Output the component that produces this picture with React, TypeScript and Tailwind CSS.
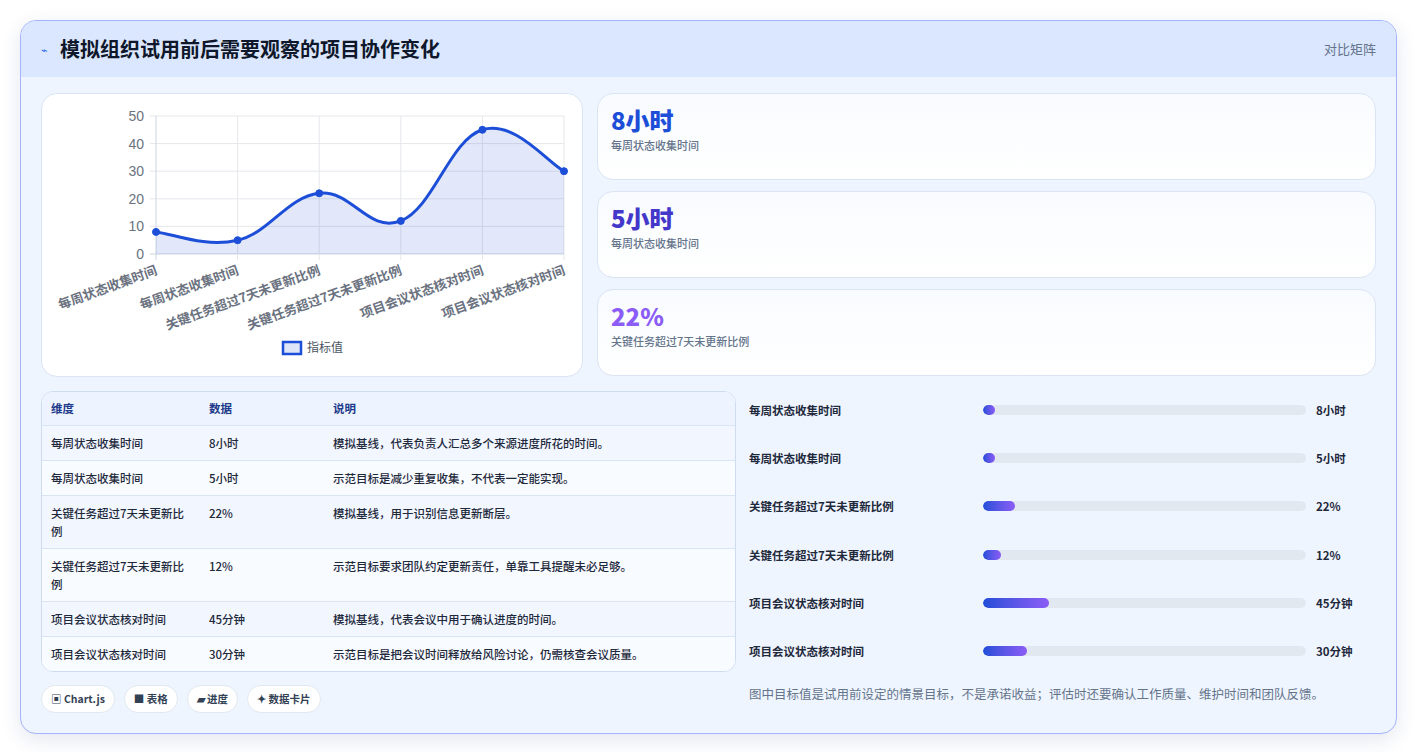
import React from "react";

const F = { fontFamily: '"Noto Sans CJK SC", "Noto Sans", sans-serif' };

const vals = [8, 5, 22, 12, 45, 30];
const labels = ["每周状态收集时间", "每周状态收集时间", "关键任务超过7天未更新比例", "关键任务超过7天未更新比例", "项目会议状态核对时间", "项目会议状态核对时间"];

function Chart() {
  const x0 = 114, x1 = 522, y0 = 160, y1 = 22;
  const pts = vals.map((v, i) => [x0 + (i * (x1 - x0)) / 5, y0 - (v / 50) * (y0 - y1)]);
  let d = `M${pts[0][0]},${pts[0][1]}`;
  const t = 0.4;
  for (let i = 0; i < pts.length - 1; i++) {
    const p0 = pts[Math.max(0, i - 1)], p1 = pts[i], p2 = pts[i + 1], p3 = pts[Math.min(pts.length - 1, i + 2)];
    const c1 = [p1[0] + ((p2[0] - p0[0]) * t) / 2, p1[1] + ((p2[1] - p0[1]) * t) / 2];
    const c2 = [p2[0] - ((p3[0] - p1[0]) * t) / 2, p2[1] - ((p3[1] - p1[1]) * t) / 2];
    d += ` C${c1[0]},${c1[1]} ${c2[0]},${c2[1]} ${p2[0]},${p2[1]}`;
  }
  const area = d + ` L${x1},${y0} L${x0},${y0} Z`;
  return (
    <svg width="542" height="283" viewBox="0 0 542 283" style={{ fontFamily: '"Liberation Sans", "Noto Sans CJK SC", sans-serif' }}>
      {[0, 10, 20, 30, 40, 50].map((v) => {
        const y = y0 - (v / 50) * (y0 - y1);
        return (
          <g key={v}>
            <line x1={x0 - 6} x2={x1} y1={y} y2={y} stroke={v === 0 ? "#cbd5e1" : "#e5e7eb"} />
            <text x={x0 - 12} y={y + 5} textAnchor="end" fontSize="14" fill="#6b7280">{v}</text>
          </g>
        );
      })}
      {pts.map((p, i) => (
        <line key={i} x1={p[0]} x2={p[0]} y1={y1} y2={y0 + 6} stroke={i === 0 ? "#cbd5e1" : "#e5e7eb"} />
      ))}
      <path d={area} fill="rgba(29,78,216,0.13)" />
      <path d={d} fill="none" stroke="#1d4ed8" strokeWidth="3" />
      {pts.map((p, i) => (
        <circle key={i} cx={p[0]} cy={p[1]} r="3.5" fill="#1d4ed8" stroke="#1d4ed8" />
      ))}
      {pts.map((p, i) => (
        <text key={i} x={p[0] + 2} y={y0 + 20} textAnchor="end" fontSize="13" fontWeight="600" fill="#6b7280"
          transform={`rotate(-20 ${p[0] + 2} ${y0 + 20})`} style={{ fontFamily: '"Noto Sans CJK SC", sans-serif' }}>{labels[i]}</text>
      ))}
      <rect x="241" y="248" width="18" height="12" fill="rgba(29,78,216,0.15)" stroke="#1d4ed8" strokeWidth="2.5" />
      <text x="265" y="258" fontSize="12" fill="#4b5563" style={{ fontFamily: '"Noto Sans CJK SC", sans-serif' }}>指标值</text>
    </svg>
  );
}

const rows = [
  ["每周状态收集时间", "8小时", "模拟基线，代表负责人汇总多个来源进度所花的时间。"],
  ["每周状态收集时间", "5小时", "示范目标是减少重复收集，不代表一定能实现。"],
  ["关键任务超过7天未更新比例", "22%", "模拟基线，用于识别信息更新断层。"],
  ["关键任务超过7天未更新比例", "12%", "示范目标要求团队约定更新责任，单靠工具提醒未必足够。"],
  ["项目会议状态核对时间", "45分钟", "模拟基线，代表会议中用于确认进度的时间。"],
  ["项目会议状态核对时间", "30分钟", "示范目标是把会议时间释放给风险讨论，仍需核查会议质量。"],
];
const widths = [12, 12, 32, 18, 66, 44];

export default function App() {
  return (
    <div className="min-h-[752px] bg-white p-5" style={F}>
      <div className="rounded-2xl border border-[#a5b4fc] bg-[#eff5ff] overflow-hidden shadow-[0_6px_20px_rgba(30,58,138,0.12)]">
        <div className="h-[56px] bg-[#dbe7fe] flex items-center justify-between px-5">
          <div className="flex items-center gap-3">
            <span className="text-[#2563eb] text-[11px]">⌁</span>
            <h1 className="text-[20px] font-bold text-[#0f172a]">模拟组织试用前后需要观察的项目协作变化</h1>
          </div>
          <span className="text-[13px] text-[#64748b]">对比矩阵</span>
        </div>
        <div className="p-5 pt-4 flex flex-col gap-[14px]">
          <div className="flex gap-[14px]">
            <div className="w-[542px] h-[284px] bg-white rounded-2xl border border-[#dbe4f3] shrink-0">
              <Chart />
            </div>
            <div className="flex-1 flex flex-col gap-[11px]">
              {[["8小时", "text-[#1d4ed8]", "每周状态收集时间"], ["5小时", "text-[#4338ca]", "每周状态收集时间"], ["22%", "text-[#8b5cf6]", "关键任务超过7天未更新比例"]].map(([v, c, l], i) => (
                <div key={i} className="h-[87px] rounded-2xl border border-[#dbe4f3] bg-gradient-to-b from-[#f8fbff] to-white px-[13px] pt-[10px]">
                  <div className={`text-[24px] font-extrabold leading-[32px] ${c}`}>{v}</div>
                  <div className="text-[11px] text-[#64748b] font-medium mt-[1px]">{l}</div>
                </div>
              ))}
            </div>
          </div>
          <div className="flex gap-[13px]">
            <div className="w-[695px] shrink-0 flex flex-col">
              <div className="rounded-xl border border-[#cfdcef] overflow-hidden bg-white">
                <table className="w-full table-fixed text-[11.5px] text-[#1e293b] font-medium border-collapse">
                  <thead>
                    <tr className="bg-[#eef4ff] text-[#1e3a8a] h-[33px] text-left">
                      <th className="pl-[9px] w-[167px] font-semibold">维度</th>
                      <th className="w-[124px] font-semibold">数据</th>
                      <th className="font-semibold">说明</th>
                    </tr>
                  </thead>
                  <tbody>
                    {rows.map((r, i) => (
                      <tr key={i} className={`border-t border-[#dbe4f3] align-top ${i % 2 === 0 ? "bg-[#f1f6ff]" : "bg-[#f8fbff]"}`}>
                        <td className="pl-[9px] pr-[20px] py-[8px] leading-[18px]">{r[0]}</td>
                        <td className="py-[8px] leading-[18px]">{r[1]}</td>
                        <td className="py-[8px] leading-[18px]">{r[2]}</td>
                      </tr>
                    ))}
                  </tbody>
                </table>
              </div>
              <div className="flex gap-[9px] mt-[13px]">
                {["▣ Chart.js", "■ 表格", "▰ 进度", "✦ 数据卡片"].map((c) => (
                  <span key={c} className="h-[28px] px-[9px] rounded-full bg-white border border-[#e2e8f0] text-[10.5px] font-semibold text-[#334155] flex items-center">{c}</span>
                ))}
              </div>
            </div>
            <div className="flex-1 flex flex-col pt-[9px]">
              {rows.map((r, i) => (
                <div key={i} className="h-[48.2px] flex items-start">
                  <span className="w-[234px] text-[11.5px] font-semibold text-[#1e293b] leading-[20px]">{r[0]}</span>
                  <div className="w-[323px] h-[10px] mt-[5px] rounded-full bg-[#e2e8f0] overflow-hidden">
                    <div className="h-full rounded-full bg-gradient-to-r from-[#1d4ed8] to-[#8b5cf6]" style={{ width: widths[i] }} />
                  </div>
                  <span className="ml-[10px] text-[11.5px] font-bold text-[#1e293b] leading-[20px]">{r[1]}</span>
                </div>
              ))}
              <p className="text-[12.5px] text-[#64748b] -mt-[4px]">图中目标值是试用前设定的情景目标，不是承诺收益；评估时还要确认工作质量、维护时间和团队反馈。</p>
            </div>
          </div>
        </div>
      </div>
    </div>
  );
}
